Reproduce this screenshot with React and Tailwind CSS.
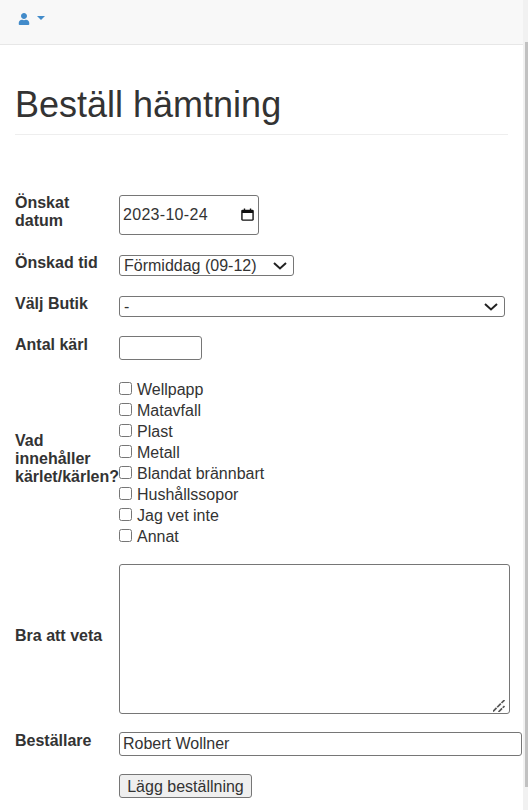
import React from "react";
import { FaUser } from "react-icons/fa";

const boxes = [
  "Wellpapp",
  "Matavfall",
  "Plast",
  "Metall",
  "Blandat brännbart",
  "Hushållssopor",
  "Jag vet inte",
  "Annat",
];

const Row = ({ label, className = "", labelClass = "pb-[5px]", children }) => (
  <div className={`flex items-center ${className}`}>
    <div className={`w-[104px] shrink-0 leading-[18px] font-bold ${labelClass}`}>
      {label}
    </div>
    <div className="min-w-0">{children}</div>
  </div>
);

const field = "block border border-[#767676] rounded-[3px] bg-white";

const Select = ({ width, children }) => (
  <div className={`relative ${width}`}>
    <select className={`${field} appearance-none w-full h-[21px] pl-[4px] leading-[19px]`}>
      {children}
    </select>
    <svg
      className="absolute right-[7px] top-[7px] pointer-events-none"
      width="14"
      height="8"
      viewBox="0 0 14 8"
      fill="none"
      stroke="#222"
      strokeWidth="2"
    >
      <path d="M1 1l6 5.5L13 1" />
    </svg>
  </div>
);

export default function App() {
  return (
    <div className="flex h-[810px] overflow-hidden bg-white text-[16px] text-[#333] font-['Liberation_Sans',Arial,sans-serif]">
      <div className="flex-1 min-w-0">
        <nav className="flex h-[45px] items-start border-b border-[#e7e7e7] bg-[#f8f8f8] pl-[18px] pt-[13px] text-[#428bca]">
          <FaUser className="w-[12px] h-[12px]" />
          <span className="ml-[7px] mt-[3px] border-x-4 border-t-4 border-x-transparent border-t-[#428bca]" />
        </nav>

        <div className="pl-[15px] pr-[15px]">
          <h1 className="mt-[40px] border-b border-[#eee] pb-[9px] text-[36px] leading-[40px] font-normal text-[#333]">
            Beställ hämtning
          </h1>

          <form className="pt-[59px]">
            <Row label="Önskat datum">
              <div className="relative w-[140px]">
                <input
                  type="text"
                  defaultValue="2023-10-24"
                  className={`${field} w-full h-[40px] px-[3px] tracking-[0.3px]`}
                />
                <svg
                  className="absolute right-[5px] top-[13px] pointer-events-none"
                  width="13"
                  height="13"
                  viewBox="0 0 14 14"
                  fill="none"
                >
                  <path d="M1.7 2.5h10.6a.7.7 0 0 1 .7.7v9.100a.7.7 0 0 1-.7.7H1.700a.7.7 0 0 1-.7-.7V3.200a.7.7 0 0 1 .7-.7z" stroke="#111" strokeWidth="1.500" />
                  <path d="M1 3h12v2.500H1zM3 .5h1.500V3H3zM9.500.5H11V3H9.500z" fill="#111" />
                </svg>
              </div>
            </Row>
            <Row label="Önskad tid" className="mt-[19px]">
              <Select width="w-[175px]">
                <option>Förmiddag (09-12)</option>
              </Select>
            </Row>
            <Row label="Välj Butik" className="mt-[18px]">
              <Select width="w-[386px]">
                <option>-</option>
              </Select>
            </Row>
            <Row label="Antal kärl" labelClass="pb-[6px]" className="mt-[18px]">
              <input type="text" className={`${field} w-[83px] h-[24px]`} />
            </Row>
            <Row label="Vad innehåller kärlet/kärlen?" labelClass="pb-[9px]" className="mt-[19px]">
              <div className="flex flex-col">
                {boxes.map((b) => (
                  <label key={b} className="flex h-[21px] items-center">
                    <input type="checkbox" className="m-0 mr-[5px] mb-[2px] w-[13px] h-[13px]" />
                    {b}
                  </label>
                ))}
              </div>
            </Row>
            <Row label="Bra att veta" labelClass="pb-[7px]" className="mt-[17px]">
              <div className="relative">
                <textarea className={`${field} w-[391px] h-[150px] resize-none`} />
                <svg
                  className="absolute right-[3px] bottom-[2px] pointer-events-none"
                  width="12"
                  height="12"
                  viewBox="0 0 12 12"
                  fill="none"
                  stroke="#555"
                  strokeWidth="1.700"
                >
                  <path d="M0 11.500L11.500 0M5.500 12L11.500 6" strokeDasharray="5 1" />
                </svg>
              </div>
            </Row>
            <Row label="Beställare" labelClass="pb-[6px]" className="mt-[18px]">
              <input
                type="text"
                defaultValue="Robert Wollner"
                className={`${field} w-[403px] h-[24px] px-[3px]`}
              />
            </Row>
            <div className="mt-[18px] pl-[104px]">
              <button
                type="button"
                className="block w-[133px] h-[24px] border border-[#767676] rounded-[3px] bg-[#efefef]"
              >
                Lägg beställning
              </button>
            </div>
          </form>
        </div>
      </div>

      <div className="w-[5px] shrink-0 bg-[#f1f1f1] pl-[2px] pt-[42px]">
        <div className="h-[745px] w-[3px] bg-[#c1c1c1]" />
      </div>
    </div>
  );
}
